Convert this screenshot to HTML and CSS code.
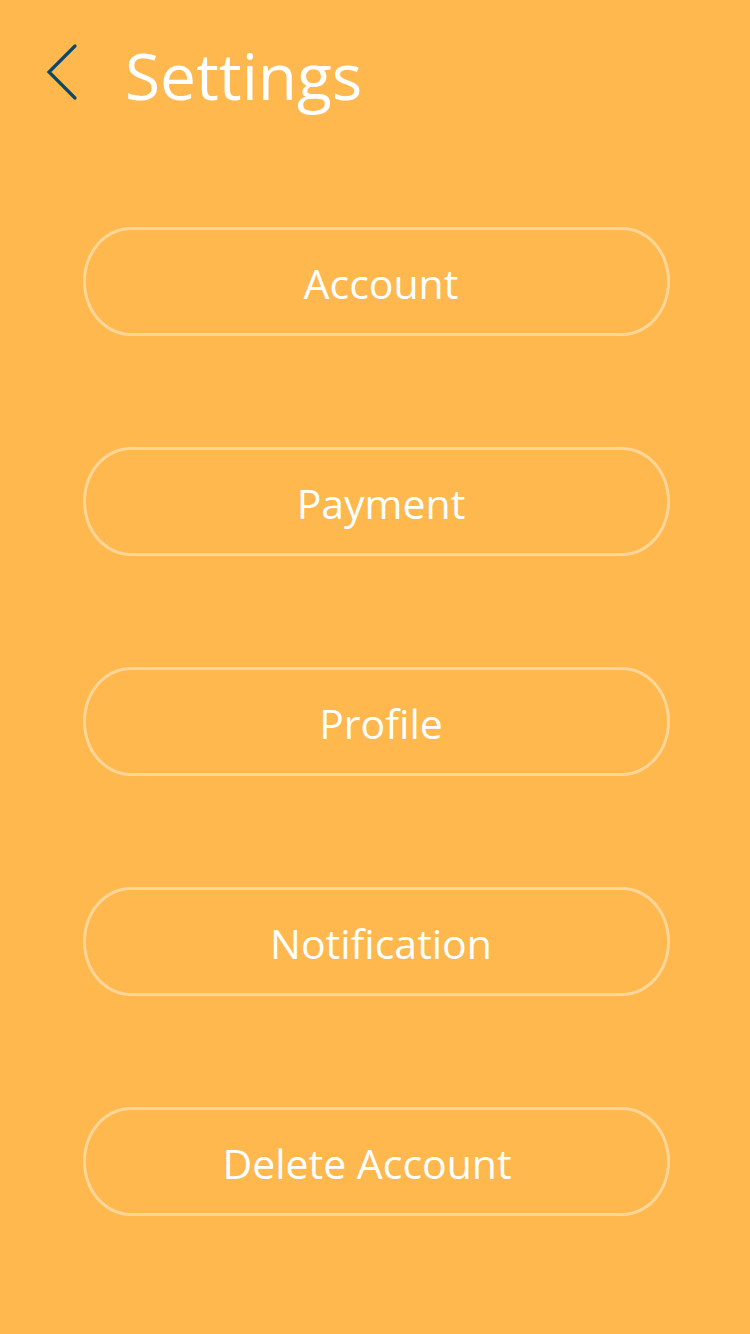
FILE: index.html
```html
<!DOCTYPE html>
<html lang="en">
<head>
<meta charset="utf-8">
<title>Settings</title>
<link rel="stylesheet" href="styles.css">
</head>
<body>
<div class="screen">
  <header class="header">
    <button class="back" aria-label="Back">
      <svg width="34" height="60" viewBox="0 0 34 60">
        <polyline points="29,3 3,29 29,55" fill="none" stroke="#0c4868" stroke-width="3.2" stroke-linecap="round" stroke-linejoin="miter"/>
      </svg>
    </button>
    <h1 class="title">Settings</h1>
  </header>
  <nav class="menu">
    <button class="item">Account</button>
    <button class="item">Payment</button>
    <button class="item">Profile</button>
    <button class="item">Notification</button>
    <button class="item item--wide">Delete Account</button>
  </nav>
</div>
</body>
</html>
```

FILE: styles.css
```css
html, body {
  margin: 0;
  padding: 0;
  background: #ffb84e;
}
.screen {
  width: 750px;
  height: 1334px;
  background: #ffb84e;
  font-family: "Open Sans", "Noto Sans", sans-serif;
  color: #ffffff;
  display: flex;
  flex-direction: column;
}
.header {
  display: flex;
  align-items: center;
  padding: 35px 0 0 46px;
  height: 76px;
}
.back {
  background: none;
  border: none;
  padding: 0;
  margin: 0;
  width: 34px;
  height: 60px;
  display: flex;
}
.title {
  margin: 6px 0 0 45px;
  font-weight: 400;
  font-size: 64px;
  line-height: 76px;
  letter-spacing: 0;
}
.menu {
  display: flex;
  flex-direction: column;
  align-items: center;
  gap: 111px;
  padding-top: 116px;
  padding-left: 2px;
}
.item {
  box-sizing: border-box;
  width: 587px;
  height: 109px;
  border: 3px solid rgba(255, 255, 255, 0.42);
  border-radius: 48px / 54px;
  background: transparent;
  color: #ffffff;
  font-family: "Open Sans", "Noto Sans", sans-serif;
  font-size: 41px;
  font-weight: 400;
  padding: 3px 0 0 10px;
  line-height: 1;
}
.item--wide {
  padding-left: 0;
  padding-right: 18px;
}
```
